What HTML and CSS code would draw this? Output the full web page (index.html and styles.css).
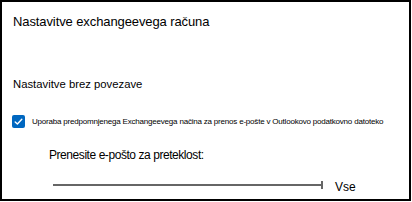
FILE: index.html
```html
<!DOCTYPE html>
<html lang="sl">
<head>
<meta charset="utf-8">
<title>Nastavitve exchangeevega računa</title>
<link rel="stylesheet" href="styles.css">
</head>
<body>
<div class="panel">
  <div class="title">Nastavitve exchangeevega računa</div>
  <div class="section">Nastavitve brez povezave</div>
  <div class="check-row">
    <svg class="checkbox" width="13" height="13" viewBox="0 0 13 13" aria-hidden="true">
      <rect x="0" y="0" width="13" height="13" rx="2" fill="#0067c0"/>
      <path d="M3.2 6.9 L5.4 9 L9.8 4.3" fill="none" stroke="#ffffff" stroke-width="1.4" stroke-linecap="round" stroke-linejoin="round"/>
    </svg>
    <span class="check-label">Uporaba predpomnjenega Exchangeevega načina za prenos e-pošte v Outlookovo podatkovno datoteko</span>
  </div>
  <div class="slider-label">Prenesite e-pošto za preteklost:</div>
  <div class="slider-row">
    <div class="track"></div>
    <div class="tick"></div>
    <div class="value">Vse</div>
  </div>
</div>
</body>
</html>
```
FILE: styles.css
```css
html, body {
  margin: 0;
  padding: 0;
  background: #ffffff;
}

body {
  font-family: "Liberation Sans", Arial, sans-serif;
  color: #000000;
}

.panel {
  box-sizing: border-box;
  width: 411px;
  height: 201px;
  border: 2px solid #000000;
  padding: 12px 0 0 11px;
  display: flex;
  flex-direction: column;
  align-items: flex-start;
}

.title {
  font-size: 13px;
  line-height: 16px;
  letter-spacing: -0.1px;
  white-space: nowrap;
}

.section {
  margin-top: 48px;
  font-size: 11.3px;
  line-height: 13px;
  white-space: nowrap;
}

.check-row {
  margin-top: 24px;
  margin-left: -1px;
  display: flex;
  align-items: center;
  height: 13px;
}

.checkbox {
  display: block;
  flex: none;
}

.check-label {
  margin-left: 7px;
  font-size: 8px;
  line-height: 10px;
  letter-spacing: -0.2px;
  white-space: nowrap;
}

.slider-label {
  margin-top: 20px;
  margin-left: 36px;
  font-size: 12px;
  line-height: 14px;
  letter-spacing: -0.44px;
  white-space: nowrap;
}

.slider-row {
  margin-top: 18px;
  margin-left: 40px;
  display: flex;
  align-items: flex-start;
}

.track {
  width: 268px;
  height: 2px;
  margin-top: 4px;
  background: #666666;
}

.tick {
  width: 2px;
  height: 8px;
  margin-top: 1px;
  background: #666666;
}

.value {
  margin-left: 12px;
  font-size: 12px;
  line-height: 14px;
}
```
